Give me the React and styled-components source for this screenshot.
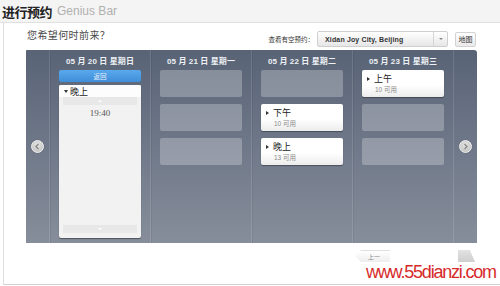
import React from 'react';
import styled, { createGlobalStyle } from 'styled-components';

const GlobalStyle = createGlobalStyle`
  body {
    margin: 0;
    background: #fff;
    font-family: "Liberation Sans", "Noto Sans CJK SC", sans-serif;
  }
`;

const Page = styled.div`
  position: relative;
  width: 500px;
  height: 286px;
  overflow: hidden;
  background: #fff;
`;

const Header = styled.div`
  height: 22px;
  display: flex;
  align-items: center;
  gap: 5px;
  padding-left: 2px;
  background: #f4f4f4;
  border-bottom: 1px solid #e0e0e0;
`;

const Title = styled.span`
  font-size: 13px;
  font-weight: bold;
  color: #222;
  letter-spacing: -0.5px;
`;

const SubTitle = styled.span`
  font-size: 12px;
  color: #b0b0b0;
`;

const Content = styled.div`
  margin-left: 3px;
  height: 261px;
  border-left: 1px solid #dedede;
  border-bottom: 1px solid #d0d0d0;
  padding: 0 23px 0 22px;
`;

const TopRow = styled.div`
  height: 27px;
  display: flex;
  justify-content: space-between;
  align-items: flex-start;
  padding-top: 7px;
  box-sizing: border-box;
`;

const Question = styled.div`
  font-size: 10px;
  color: #4a4a4a;
  letter-spacing: 0.4px;
  margin-left: 1px;
  line-height: 12px;
`;

const Finder = styled.div`
  display: flex;
  align-items: center;
  margin-top: 1px;
`;

const FinderLabel = styled.span`
  font-size: 6.5px;
  color: #333;
  margin-right: 3px;
`;

const Select = styled.div`
  width: 131px;
  height: 16px;
  box-sizing: border-box;
  display: flex;
  align-items: center;
  border: 1px solid #cfcfcf;
  border-radius: 2px;
  background: linear-gradient(#ffffff, #e6e6e6);
`;

const SelectText = styled.span`
  flex: 1;
  padding-left: 7px;
  font-size: 7px;
  font-weight: bold;
  color: #333;
  letter-spacing: 0.15px;
`;

const SelectArrow = styled.span`
  width: 13px;
  height: 100%;
  border-left: 1px solid #d6d6d6;
  display: flex;
  align-items: center;
  justify-content: center;
  &::after {
    content: '';
    border-left: 2px solid transparent;
    border-right: 2px solid transparent;
    border-top: 2px solid #888;
  }
`;

const MapButton = styled.div`
  margin-left: 7px;
  margin-right: 1px;
  width: 21px;
  height: 15px;
  box-sizing: border-box;
  border: 1px solid #d2d2d2;
  border-radius: 2px;
  background: linear-gradient(#fff, #eaeaea);
  font-size: 7px;
  color: #333;
  display: flex;
  align-items: center;
  justify-content: center;
`;

const Board = styled.div`
  height: 193px;
  display: flex;
  border-radius: 1px 3px 0 0;
  background: linear-gradient(#586375 0%, #6d7687 45%, #868e9b 100%);
`;

const Gutter = styled.div`
  width: ${(p) => p.$w}px;
  display: flex;
  align-items: center;
  justify-content: center;
  border-left: ${(p) => (p.$right ? '1px solid rgba(255,255,255,0.12)' : 'none')};
`;

const ArrowButton = styled.div`
  width: 13px;
  height: 13px;
  border-radius: 50%;
  box-sizing: border-box;
  border: 1px solid #f4f4f4;
  background: radial-gradient(circle at 50% 35%, #e4e4e4, #bdbdbd);
  display: flex;
  align-items: center;
  justify-content: center;
  box-shadow: 0 0 1px rgba(0, 0, 0, 0.4);
`;

const Column = styled.div`
  width: 101px;
  box-sizing: border-box;
  padding: 0 9px;
  border-left: 1px solid rgba(255, 255, 255, 0.12);
  box-shadow: inset 1px 0 0 rgba(0, 0, 0, 0.06);
  display: flex;
  flex-direction: column;
`;

const DateHead = styled.div`
  height: 20px;
  padding-top: 4px;
  box-sizing: border-box;
  line-height: 16px;
  text-align: center;
  font-size: 8px;
  font-weight: bold;
  color: #eef1f5;
  letter-spacing: 0.1px;
  white-space: nowrap;
`;

const CardList = styled.div`
  display: flex;
  flex-direction: column;
  gap: 7px;
`;

const Slot = styled.div`
  height: 27px;
  box-sizing: border-box;
  border-radius: 2px;
  padding: 4px 0 0 5px;
  background: ${(p) =>
    p.$open ? 'linear-gradient(#ffffff 55%, #ececec)' : 'rgba(255,255,255,0.26)'};
  box-shadow: ${(p) => (p.$open ? '0 1px 1px rgba(0,0,0,0.35)' : 'none')};
`;

const SlotTitle = styled.div`
  display: flex;
  align-items: center;
  gap: 4px;
  font-size: 9px;
  color: #222;
  line-height: 10px;
`;

const Tri = styled.span`
  width: 0;
  height: 0;
  border-top: 2px solid transparent;
  border-bottom: 2px solid transparent;
  border-left: 3px solid #333;
`;

const TriDown = styled.span`
  width: 0;
  height: 0;
  border-left: 2px solid transparent;
  border-right: 2px solid transparent;
  border-top: 3px solid #333;
`;

const SlotCount = styled.div`
  margin-left: 8px;
  margin-top: 1px;
  font-size: 6.5px;
  color: #8a8a8a;
  line-height: 9px;
`;

const BackButton = styled.div`
  height: 12px;
  margin-bottom: 3px;
  border-radius: 2px;
  background: linear-gradient(#5aa8ec, #3f8ed8);
  color: #e8f2fc;
  font-size: 6.5px;
  display: flex;
  align-items: center;
  justify-content: center;
`;

const TimePanel = styled.div`
  height: 153px;
  border-radius: 2px;
  background: #f2f2f2;
  box-shadow: 0 1px 1px rgba(0, 0, 0, 0.4);
  display: flex;
  flex-direction: column;
`;

const PanelHead = styled.div`
  height: 12px;
  display: flex;
  align-items: center;
  gap: 2px;
  padding-left: 5px;
  background: #fdfdfd;
  border-radius: 2px 2px 0 0;
  font-size: 9px;
  color: #222;
`;

const ScrollBar = styled.div`
  margin: ${(p) => (p.$bottom ? 'auto 4px 5px' : '0 4px')};
  height: 8px;
  background: #e8e8e8;
  display: flex;
  align-items: center;
  justify-content: center;
  &::after {
    content: '';
    border-left: 2px solid transparent;
    border-right: 2px solid transparent;
    ${(p) => (p.$bottom ? 'border-top: 2px solid #fff;' : 'border-bottom: 2px solid #fff;')}
  }
`;

const TimeText = styled.div`
  margin-top: 3px;
  text-align: center;
  font-family: "Liberation Serif", "DejaVu Serif", serif;
  font-size: 9px;
  color: #555;
`;

const Footer = styled.div`
  display: flex;
  justify-content: flex-end;
  align-items: flex-start;
  padding-top: 7px;
`;

const PrevButton = styled.div`
  width: 35px;
  height: 12px;
  box-sizing: border-box;
  padding-left: 13px;
  font-size: 6px;
  color: #888;
  line-height: 12px;
  background: linear-gradient(#ffffff, #eeeeee);
  clip-path: polygon(6px 0, 100% 0, 100% 100%, 6px 100%, 0 50%);
  border-top: 1px solid #e0e0e0;
`;

const NextButton = styled.div`
  margin-left: 68px;
  margin-right: 2px;
  width: 17px;
  height: 12px;
  background: linear-gradient(#e2e2e2, #cfcfcf);
  clip-path: polygon(0 0, 70% 0, 100% 100%, 0 100%);
`;

const Watermark = styled.div`
  position: absolute;
  left: 366px;
  top: 262px;
  font-family: "Liberation Sans", Arial, sans-serif;
  font-size: 18px;
  letter-spacing: -1.2px;
  color: #d62b2b;
  line-height: 20px;
`;

const Chevron = ({ dir }) => (
  <svg width="7" height="7" viewBox="0 0 7 7">
    <path
      d={dir === 'left' ? 'M4.5 1 L2 3.5 L4.5 6' : 'M2.5 1 L5 3.5 L2.5 6'}
      stroke="#8a8a8a"
      strokeWidth="1.4"
      fill="none"
    />
  </svg>
);

const days = [
  { date: '05 月 21 日 星期一', slots: [null, null, null] },
  {
    date: '05 月 22 日 星期二',
    slots: [null, { title: '下午', count: '10 可用' }, { title: '晚上', count: '13 可用' }],
  },
  { date: '05 月 23 日 星期三', slots: [{ title: '上午', count: '10 可用' }, null, null] },
];

const App = () => (
  <Page>
    <GlobalStyle />
    <Header>
      <Title>进行预约</Title>
      <SubTitle>Genius Bar</SubTitle>
    </Header>
    <Content>
      <TopRow>
        <Question>您希望何时前来？</Question>
        <Finder>
          <FinderLabel>查看有空预约：</FinderLabel>
          <Select>
            <SelectText>Xidan Joy City, Beijing</SelectText>
            <SelectArrow />
          </Select>
          <MapButton>地图</MapButton>
        </Finder>
      </TopRow>
      <Board>
        <Gutter $w={23}>
          <ArrowButton>
            <Chevron dir="left" />
          </ArrowButton>
        </Gutter>
        <Column>
          <DateHead>05 月 20 日 星期日</DateHead>
          <BackButton>返回</BackButton>
          <TimePanel>
            <PanelHead>
              <TriDown />
              晚上
            </PanelHead>
            <ScrollBar />
            <TimeText>19:40</TimeText>
            <ScrollBar $bottom />
          </TimePanel>
        </Column>
        {days.map((day) => (
          <Column key={day.date}>
            <DateHead>{day.date}</DateHead>
            <CardList>
              {day.slots.map((slot, i) =>
                slot ? (
                  <Slot key={i} $open>
                    <SlotTitle>
                      <Tri />
                      {slot.title}
                    </SlotTitle>
                    <SlotCount>{slot.count}</SlotCount>
                  </Slot>
                ) : (
                  <Slot key={i} />
                )
              )}
            </CardList>
          </Column>
        ))}
        <Gutter $w={23} $right>
          <ArrowButton>
            <Chevron dir="right" />
          </ArrowButton>
        </Gutter>
      </Board>
      <Footer>
        <PrevButton>上一</PrevButton>
        <NextButton />
      </Footer>
    </Content>
    <Watermark>www.55dianzi.com</Watermark>
  </Page>
);

export default App;
